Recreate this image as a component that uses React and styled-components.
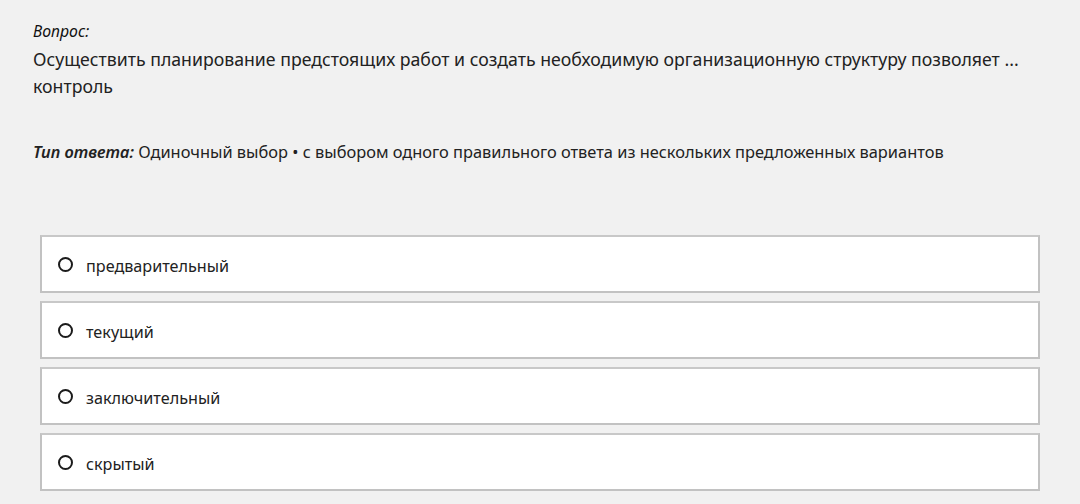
import React from "react";
import styled, { createGlobalStyle } from "styled-components";

const GlobalStyle = createGlobalStyle`
  html, body {
    margin: 0;
    padding: 0;
    background: #f1f1f1;
  }
  body {
    font-family: "Noto Sans", "Open Sans", sans-serif;
    color: #222;
  }
`;

const Page = styled.div`
  padding: 20px 32px 0 33px;
  height: 504px;
  box-sizing: border-box;
  overflow: hidden;
`;

const Label = styled.div`
  font-size: 15.8px;
  font-style: italic;
  line-height: 22px;
  color: #111;
`;

const QuestionText = styled.div`
  font-size: 17.7px;
  line-height: 27px;
  margin-top: 4px;
  color: #222;
`;

const AnswerType = styled.div`
  font-size: 16.4px;
  line-height: 24px;
  margin-top: 40px;
  color: #222;

  em {
    font-weight: 600;
    font-style: italic;
  }
`;

const Options = styled.div`
  display: flex;
  flex-direction: column;
  gap: 8px;
  margin: 71px 8px 0 7px;
`;

const Option = styled.label`
  display: flex;
  align-items: center;
  gap: 13px;
  height: 58px;
  box-sizing: border-box;
  padding: 4px 22px 0 16px;
  background: #fff;
  border: 2px solid #c2c2c2;
  border-top-color: #c8c8c8;
  font-size: 16.2px;
  color: #222;
  cursor: pointer;
`;

const Radio = styled.span`
  width: 15px;
  height: 15px;
  box-sizing: border-box;
  border: 2.5px solid #1b1b1b;
  border-radius: 50%;
  margin-top: -3px;
  flex: none;
`;

const answers = ["предварительный", "текущий", "заключительный", "скрытый"];

export default function App() {
  return (
    <>
      <GlobalStyle />
      <Page>
        <Label>Вопрос:</Label>
        <QuestionText>
          Осуществить планирование предстоящих работ и создать необходимую организационную структуру позволяет ...
          <br />
          контроль
        </QuestionText>
        <AnswerType>
          <em>Тип ответа:</em> Одиночный выбор • с выбором одного правильного ответа из нескольких предложенных вариантов
        </AnswerType>
        <Options>
          {answers.map((a) => (
            <Option key={a}>
              <Radio />
              {a}
            </Option>
          ))}
        </Options>
      </Page>
    </>
  );
}
